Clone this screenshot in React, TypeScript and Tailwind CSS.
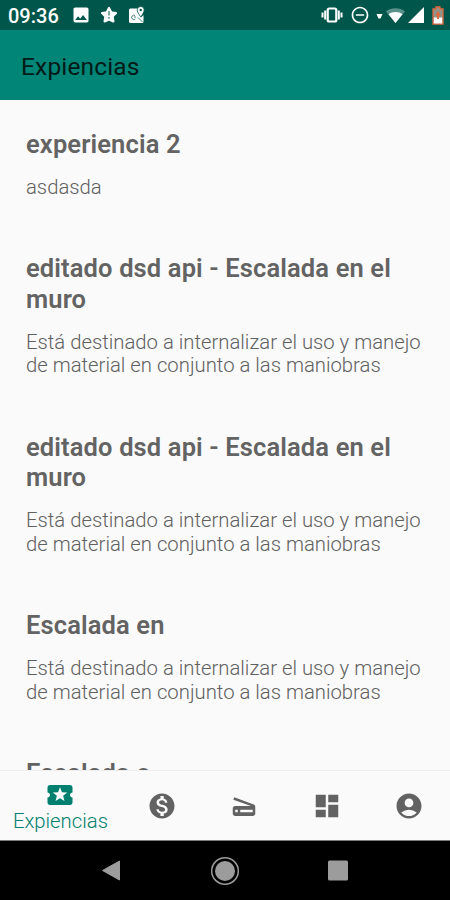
import type { ReactNode } from "react";
import {
  MdAccountCircle,
  MdDashboard,
  MdImage,
  MdLocalActivity,
  MdMonetizationOn,
  MdOutlineDoNotDisturbOn,
  MdScanner,
} from "react-icons/md";

type Experience = {
  title: string;
  description: string;
};

const climbing = "Está destinado a internalizar el uso y manejo de material en conjunto a las maniobras";

const experiences: Experience[] = [
  { title: "experiencia 2", description: "asdasda" },
  { title: "editado dsd api - Escalada en el muro", description: climbing },
  { title: "editado dsd api - Escalada en el muro", description: climbing },
  { title: "Escalada en", description: climbing },
  { title: "Escalada e", description: climbing },
];

function StatusBar() {
  return (
    <div className="flex h-[30px] shrink-0 items-center bg-[#00564a] pl-2 text-white">
      <span className="w-[51px] whitespace-nowrap pt-px text-[20px] leading-[30px] font-medium">09:36</span>
      <MdImage className="ml-3 size-5" />
      <svg className="ml-[9px] size-[18px]" viewBox="0 0 18 18">
        <path
          d="M9 2l2.2 4.300 4.800.700-3.400 3.500.8 4.900L9 13.500l-4.400 1.900.8-4.900L2 7l4.800-.7z"
          fill="currentColor"
          stroke="currentColor"
          strokeWidth="2.200"
          strokeLinejoin="round"
        />
        <path d="M9 5v4.500M9 11v1.700" stroke="#00564a" strokeWidth="1" />
      </svg>
      <svg className="ml-2.5 size-[18px]" viewBox="0 0 18 18">
        <path d="M3 2.500h7v4l3 5 2.500-2.500V15.500A1.500 1.500 0 0 1 14 17H2.500A1.500 1.500 0 0 1 1 15.500V4A1.500 1.500 0 0 1 2.500 2.500z" fill="currentColor" />
        <path d="M8 11H5.800M7.300 13A2.200 2.200 0 1 1 7 9.500M10 11.500l4.500 4.500" fill="none" stroke="#00564a" strokeWidth="0.7" />
        <path
          d="M12.700.4a3.500 3.500 0 0 0-3.500 3.500c0 2.700 3.500 6.900 3.500 6.900s3.500-4.200 3.500-6.900A3.500 3.500 0 0 0 12.700.4z"
          fill="currentColor"
          stroke="#00564a"
          strokeWidth="0.8"
        />
        <circle cx="12.700" cy="4" r="1.200" fill="#00564a" />
      </svg>
      <div className="ml-auto flex items-center pr-[6px]">
        <svg className="h-4 w-[22px]" viewBox="0 0 22 16">
          <rect x="6.700" y="1.500" width="8.600" height="13" rx="1.500" fill="none" stroke="currentColor" strokeWidth="2.200" />
          <path d="M4.200 3.500v9M1.500 5.500v5M17.800 3.500v9M20.500 5.500v5" stroke="currentColor" strokeWidth="2" />
        </svg>
        <MdOutlineDoNotDisturbOn className="ml-[7px] size-5" />
        <svg className="ml-[6px] h-4 w-[7px]" viewBox="0 0 7 16">
          <path d="M.5 7h6L4.500 11.500h-2z" fill="currentColor" />
        </svg>
        <svg className="ml-[3px] h-4 w-[19px]" viewBox="0 0 19 16">
          <path d="M0 4.500C5 .3 14 .3 19 4.500L9.500 16z" fill="currentColor" opacity="0.35" />
          <path d="M2.500 7.300c4-3 10-3 14 0L9.500 16z" fill="currentColor" />
        </svg>
        <svg className="ml-[3px] h-4 w-4" viewBox="0 0 16 16">
          <path d="M0 16L16 0v16z" fill="currentColor" />
        </svg>
        <svg className="ml-2 h-[19px] w-[12px]" viewBox="0 0 12 19">
          <path d="M1 3h3V1h4v2h3v15H1z" fill="#8f9388" stroke="#e2673f" strokeWidth="1.300" />
          <path d="M1.800 11.500h8.400v6H1.800z" fill="#fff" />
          <path d="M6 5l2.600 4.500H7V13H5V9.500H3.400z" fill="#e2673f" />
        </svg>
      </div>
    </div>
  );
}

function NavItem({ children }: { children: ReactNode }) {
  return <button type="button" className="flex w-[82.4px] items-center justify-center text-[#626262]">{children}</button>;
}

export default function App() {
  return (
    <div className="flex h-[900px] w-[450px] flex-col overflow-hidden bg-[#fafafa] font-['Roboto',sans-serif]">
      <StatusBar />

      <header className="flex h-[70px] shrink-0 items-center bg-[#018577] pl-[21px] pt-[5px]">
        <h1 className="text-[24.500px] font-[450] tracking-[0.15px] text-[#021a17]">Expiencias</h1>
      </header>

      <main className="min-h-0 flex-1 overflow-hidden pt-[29px] pl-[26px]">
        {experiences.map((item, index) => (
          <article key={index} className="mb-[53.7px] w-[410px]">
            <h2 className="text-[25.500px] leading-[30.700px] font-semibold tracking-[0.13px] text-[#636363]">{item.title}</h2>
            <p className="mt-4 text-[20.300px] leading-[23.700px] font-light text-[#606060]">{item.description}</p>
          </article>
        ))}
      </main>

      <nav className="flex h-[70px] shrink-0 border-t border-[#eeeeee] bg-[#fafafa]">
        <button type="button" className="flex w-[121px] flex-col items-center pt-[9px] text-[#018070]">
          <MdLocalActivity className="size-[30px]" />
          <span className="-mt-px text-[20.300px] leading-6 font-light">Expiencias</span>
        </button>
        <NavItem>
          <MdMonetizationOn className="size-[30px]" />
        </NavItem>
        <NavItem>
          <MdScanner className="size-[30px]" />
        </NavItem>
        <NavItem>
          <MdDashboard className="size-[30px]" />
        </NavItem>
        <NavItem>
          <MdAccountCircle className="size-[30px]" />
        </NavItem>
      </nav>

      <div className="flex h-[60px] shrink-0 items-center justify-center gap-[83px] border-t border-[#7d7d7d] bg-black text-[#9c9c9c]">
        <svg className="size-[30px]" viewBox="0 0 30 30">
          <path d="M5.500 14.500l17-9.500v19z" fill="currentColor" stroke="currentColor" strokeLinejoin="round" />
        </svg>
        <svg className="size-[30px]" viewBox="0 0 30 30">
          <circle cx="15" cy="15" r="13.300" fill="none" stroke="currentColor" strokeWidth="1.500" />
          <circle cx="15" cy="15" r="10" fill="currentColor" />
        </svg>
        <svg className="size-[30px]" viewBox="0 0 30 30">
          <rect x="5" y="4.500" width="20" height="20" rx="1.500" fill="currentColor" />
        </svg>
      </div>
    </div>
  );
}
